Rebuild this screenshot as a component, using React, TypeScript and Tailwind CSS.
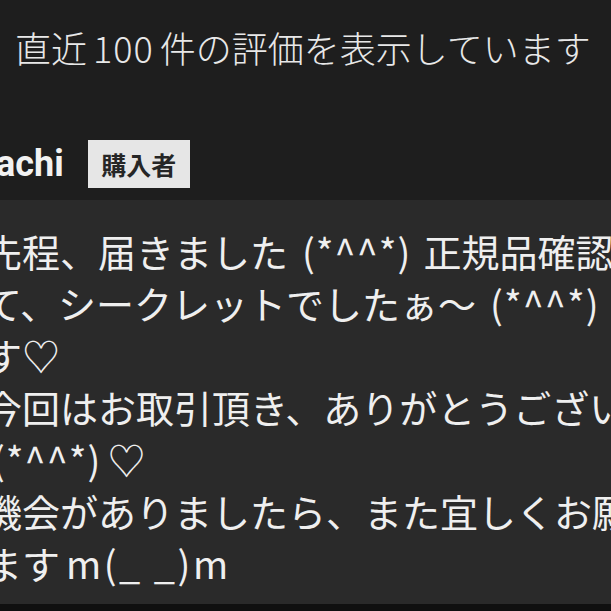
import React from "react";

const jp = { fontFamily: '"Noto Sans CJK JP", "Noto Sans", sans-serif' };

function Kao({ cls }: { cls: string }) {
  return <span className={`${cls} tracking-[1px]`}>(*^^*)</span>;
}

export default function App() {
  const line = "text-[38px] leading-[52px] text-[#efefef] whitespace-nowrap";
  return (
    <div
      className="w-[611px] h-[611px] overflow-hidden bg-[#1e1e1e] flex flex-col"
      style={jp}
    >
      <div className="pt-[23px] pl-[15px] text-[36px] leading-[48px] text-[#e8e8e8] whitespace-nowrap font-light">
        直近<span className="mx-[6px] tracking-[1px]">100</span>件の評価を表示しています
      </div>
      <div className="mt-[69px] h-[48px] flex items-center gap-[24px] whitespace-nowrap">
        <span
          className="ml-[-4px] text-[36px] font-bold text-[#f2f2f2] leading-none"
          style={{ fontFamily: 'Roboto, "Liberation Sans", sans-serif' }}
        >
          achi
        </span>
        <span className="h-[48px] w-[102px] bg-[#e6e6e6] text-[#262626] text-[25px] font-bold flex items-center justify-center leading-none">
          購入者
        </span>
      </div>
      <div className="mt-[12px] h-[404px] bg-[#2a2a2a] pt-[25px] overflow-hidden">
        <div className={`${line} ml-[-16px]`}>
          先程、届きました
          <Kao cls="ml-[14px] mr-[12px]" />
          正規品確認し
        </div>
        <div className={`${line} ml-[-16px]`}>
          て、シークレットでしたぁ〜
          <Kao cls="ml-[14px] mr-[12px]" />
          で
        </div>
        <div className={`${line} ml-[-16px]`}>す♡</div>
        <div className={`${line} ml-[-16px]`}>今回はお取引頂き、ありがとうございま</div>
        <div className={`${line} ml-[-8px]`}>
          <Kao cls="mr-[6px]" />♡
        </div>
        <div className={`${line} ml-[-16px]`}>機会がありましたら、また宜しくお願いし</div>
        <div className={`${line} ml-[-16px]`}>
          ます<span className="ml-[6px] tracking-[2.5px]">m(_ _)m</span>
        </div>
      </div>
      <div className="flex-1 bg-[#101010]" />
    </div>
  );
}
